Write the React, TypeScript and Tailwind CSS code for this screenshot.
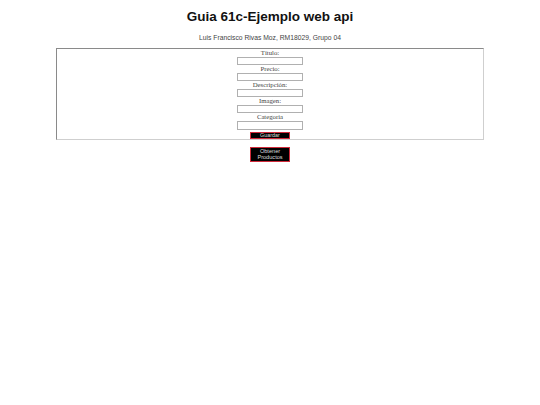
const fields = ["Título:", "Precio:", "Descripción:", "Imagen:", "Categoria"];

export default function App() {
  return (
    <div className="min-h-[405px] w-[540px] bg-white text-black">
      <h1 className="mt-[9px] mb-[9px] text-center font-['Liberation_Sans',Arial,sans-serif] text-[13.5px] font-bold leading-[15.5px] text-[#111]">
        Guia 61c-Ejemplo web api
      </h1>
      <p className="mb-[6.75px] text-center font-['Liberation_Sans',Arial,sans-serif] text-[6.75px] leading-[7.8px] text-[#444]">
        Luis Francisco Rivas Moz, RM18029, Grupo 04
      </p>

      <form className="mx-auto flex w-[428px] flex-col items-center border border-t-[#8a8a8a] border-l-[#8a8a8a] border-r-[#cfcfcf] border-b-[#cfcfcf]">
        {fields.map((f) => (
          <div key={f} className="flex flex-col items-center">
            <label className="font-['Liberation_Serif','Times_New_Roman',serif] text-[6.75px] leading-[7.7px] text-[#444]">
              {f}
            </label>
            <input
              type="text"
              className="box-border h-[8.4px] w-[66px] border border-[#b0b0b0] bg-white outline-none"
            />
          </div>
        ))}
        <button
          type="button"
          className="mt-[2px] box-border block h-[7px] w-[40px] border border-[#d02a3a] bg-black p-0 text-center font-['Liberation_Sans',Arial,sans-serif] text-[5.4px] leading-[5px] text-[#ddd]"
        >
          Guardar
        </button>
      </form>

      <div className="mt-[7px] flex justify-center">
        <button
          type="button"
          className="box-border flex h-[15.5px] w-[40px] flex-col items-center justify-center border border-[#d02a3a] bg-black p-0 text-center font-['Liberation_Sans',Arial,sans-serif] text-[5.6px] leading-[6.2px] text-[#ddd]"
        >
          <span>Obtener</span>
          <span>Productos</span>
        </button>
      </div>
    </div>
  );
}
